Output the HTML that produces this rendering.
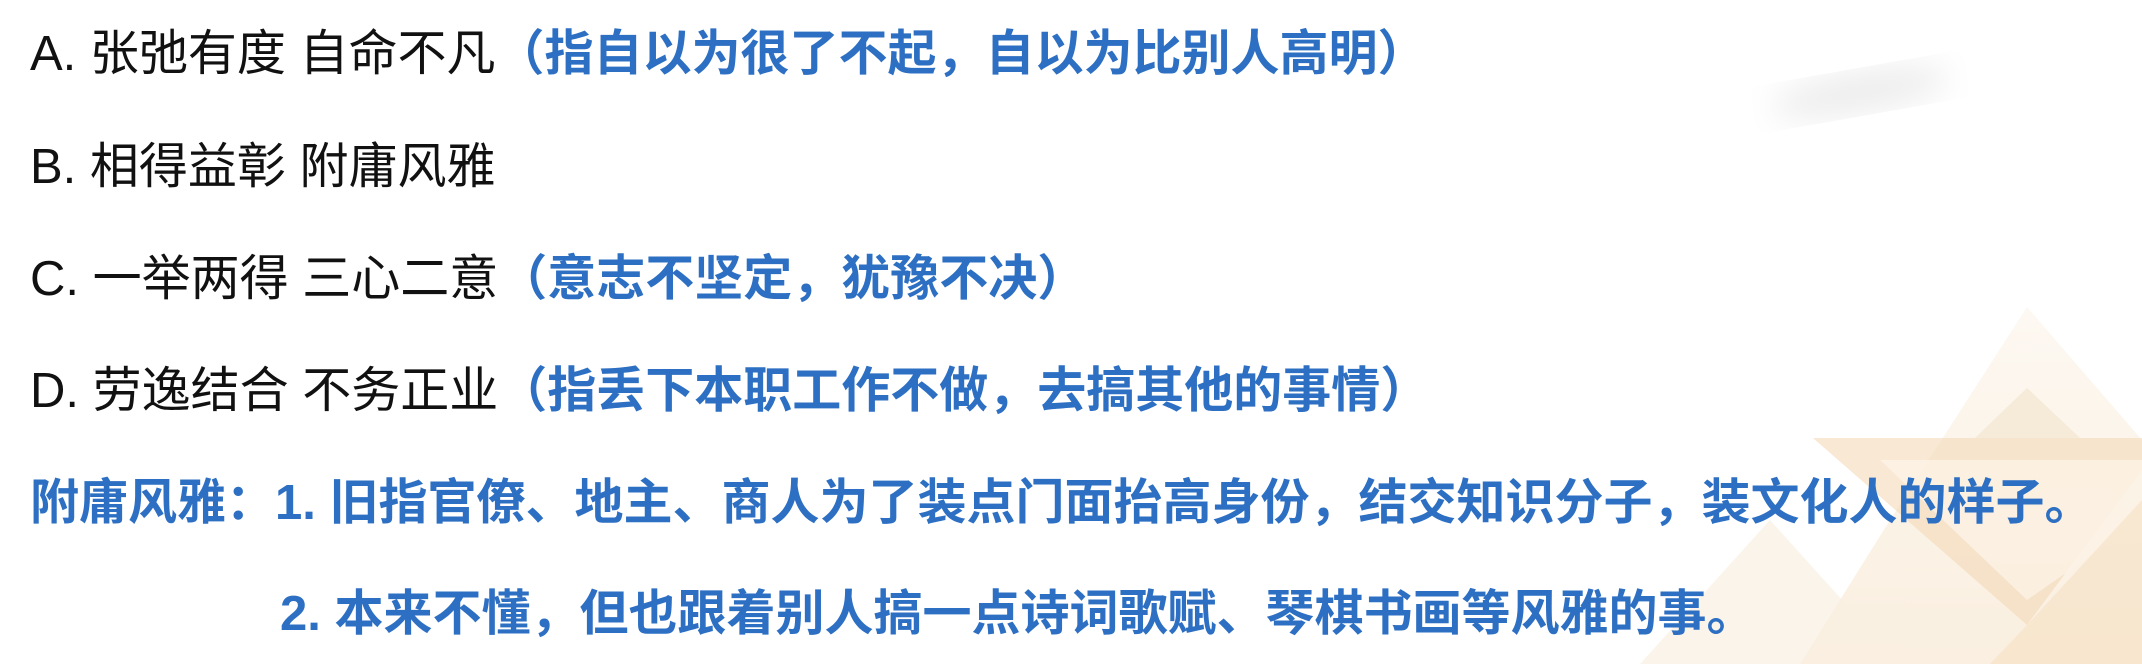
<!DOCTYPE html>
<html><head><meta charset="utf-8"><style>
html,body{margin:0;padding:0;width:2142px;height:664px;overflow:hidden;background:#fff}
.l{position:absolute;left:30px;height:60px;line-height:60px;font-size:49px;white-space:nowrap;color:#111;font-family:"Liberation Sans","Noto Sans CJK SC",sans-serif}
.b{color:#2d6fc2;font-weight:bold}
svg{position:absolute;left:0;top:0}
</style></head><body>
<svg width="2142" height="664">
<defs>
<filter id="bl"><feGaussianBlur stdDeviation="16"/></filter>
<linearGradient id="g1" x1="0" y1="0" x2="0" y2="1"><stop offset="0" stop-color="#fcf5ec"/><stop offset="1" stop-color="#f8e8d2"/></linearGradient>
</defs>
<ellipse cx="1860" cy="92" rx="90" ry="20" fill="#ececec" filter="url(#bl)" transform="rotate(-10 1860 92)"/>
<polygon points="2027,307 2142,440 2142,664 1800,664 1890,520" fill="url(#g1)" opacity="0.7"/>
<polygon points="1813,438 2142,438 2142,470 2027,625" fill="#f3d9b8" opacity="0.6"/>
<polygon points="1880,460 2142,460 2142,520 2027,600" fill="#fcf2e6" opacity="0.8"/>
<polygon points="2027,388 2080,438 1975,438" fill="#f2e2cc" opacity="0.6"/>
<polygon points="1770,520 1900,664 1640,664" fill="#faefe1" opacity="0.7"/>
<polygon points="2027,625 2142,500 2142,664 1990,664" fill="#f6e2c8" opacity="0.7"/>
</svg>
<div class="l" style="top:24px">A. 张弛有度 自命不凡<span class="b">（指自以为很了不起，自以为比别人高明）</span></div>
<div class="l" style="top:137px">B. 相得益彰 附庸风雅</div>
<div class="l" style="top:249px">C. 一举两得 三心二意<span class="b">（意志不坚定，犹豫不决）</span></div>
<div class="l" style="top:361px">D. 劳逸结合 不务正业<span class="b">（指丢下本职工作不做，去搞其他的事情）</span></div>
<div class="l b" style="top:473px">附庸风雅：1. 旧指官僚、地主、商人为了装点门面抬高身份，结交知识分子，装文化人的样子。</div>
<div class="l b" style="top:584px;left:280px">2. 本来不懂，但也跟着别人搞一点诗词歌赋、琴棋书画等风雅的事。</div>
</body></html>
